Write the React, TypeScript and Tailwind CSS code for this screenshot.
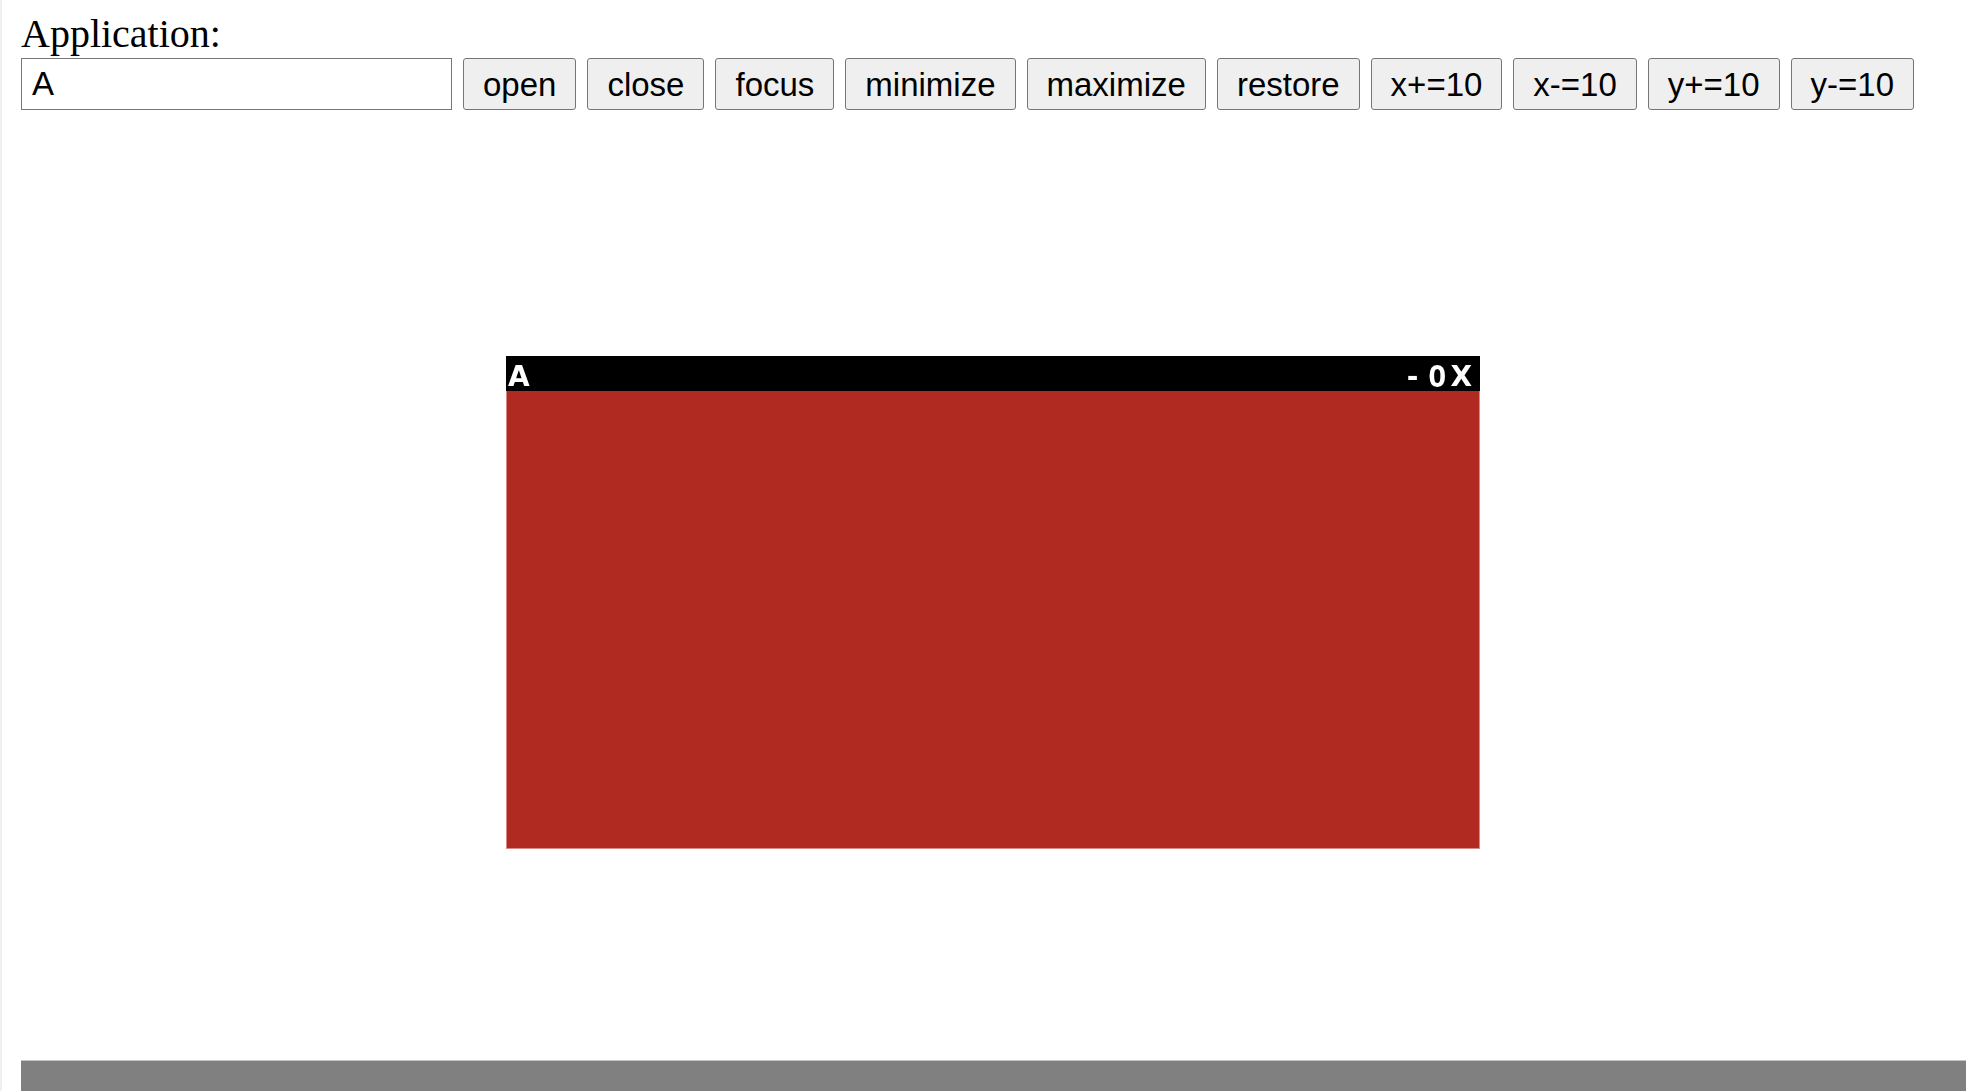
const buttons = ["open", "close", "focus", "minimize", "maximize", "restore", "x+=10", "x-=10", "y+=10", "y-=10"];

function AppWindow() {
  return (
    <div className="absolute left-[485px] top-[246px] w-[974px] h-[493px] flex flex-col blur-[0.4px]">
      <div className="h-[35px] bg-black flex items-center justify-between pl-[2px] pr-[8px] pt-[6px] text-white font-bold text-[28px] leading-none font-['DejaVu_Sans',sans-serif]">
        <span>A</span>
        <div className="flex items-center gap-[4px]">
          <span className="mr-[6px]">-</span>
          <span className="font-['DejaVu_Sans_Mono',monospace] text-[30px]">O</span>
          <span>X</span>
        </div>
      </div>
      <div className="flex-1 bg-[#b12a21] border-x border-b border-[#d98a84]" />
    </div>
  );
}

export default function App() {
  return (
    <div className="h-[1091px] w-full overflow-hidden bg-white border-l-2 border-[#f0f0f0] pl-[19px] pr-[14px] flex flex-col">
      <div className="pt-[11px] text-[40px] leading-[45px] text-black font-['Liberation_Serif',serif]">
        Application:
      </div>
      <div className="mt-[2px] flex items-center gap-[11px] font-['Liberation_Sans',Arial,sans-serif] text-[33px] text-black">
        <input
          defaultValue="A"
          className="w-[431px] h-[52px] border border-[#767676] bg-white px-[10px] outline-none"
        />
        {buttons.map((b) => (
          <button
            key={b}
            className="h-[52px] px-[19px] border border-[#767676] rounded-[3px] bg-[#efefef] leading-none"
          >
            {b}
          </button>
        ))}
      </div>
      <div className="relative flex-1">
        <AppWindow />
      </div>
      <div className="h-[31px] bg-[#808080] border-t border-[#c4c4c4]" />
    </div>
  );
}
